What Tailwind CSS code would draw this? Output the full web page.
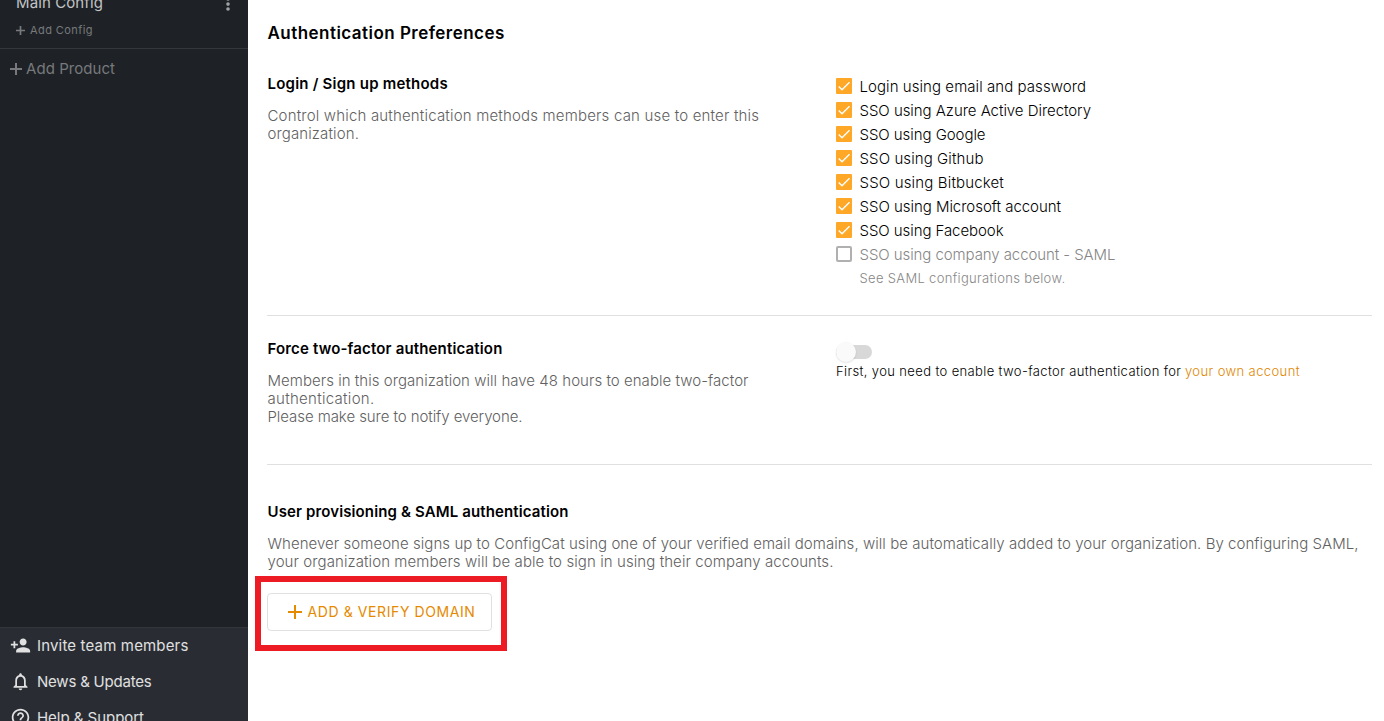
<!DOCTYPE html>
<html lang="en">
<head>
<meta charset="utf-8">
<title>Authentication Preferences</title>
<script src="https://cdn.jsdelivr.net/npm/@tailwindcss/browser@4"></script>
</head>
<body class="flex h-[721px] w-[1384px] overflow-hidden bg-white font-['Inter',sans-serif] text-[15px] leading-[18px] text-black whitespace-nowrap">
<svg class="hidden">
  <symbol id="check" viewBox="0 0 24 24"><path d="M4.1 12.7 9 17.6 20.3 6.3" fill="none" stroke="#fff" stroke-width="2.1"/></symbol>
</svg>

<aside class="flex w-[248px] shrink-0 flex-col bg-[#1e2226]">
  <div class="h-[49px] shrink-0 overflow-hidden border-b border-[#34383d] pl-4">
    <div class="-mt-[6px] flex h-[18px] justify-between">
      <span class="tracking-[0.1px] text-[#c3c4c6]">Main Config</span>
      <svg class="mt-[2px] mr-3 size-4" viewBox="0 0 16 16" fill="#a0a2a4"><circle cx="8" cy="3" r="1.8"/><circle cx="8" cy="8.1" r="1.8"/><circle cx="8" cy="13" r="1.8"/></svg>
    </div>
    <div class="mt-[11px] flex h-[14px] items-center text-[11px] leading-[14px] tracking-[0.42px] text-[#77797c]">
      <svg class="mr-[5px] size-[9px]" viewBox="0 0 9 9"><path d="M4.5 0v9M0 4.5h9" stroke="currentColor" stroke-width="1.7"/></svg>
      <span>Add Config</span>
    </div>
  </div>
  <div class="mt-[11px] flex h-[18px] items-center pl-[10px] tracking-[0.05px] text-[#77797c]">
    <svg class="mr-1 size-3" viewBox="0 0 12 12"><path d="M6 0v12M0 6h12" stroke="currentColor" stroke-width="2"/></svg>
    <span>Add Product</span>
  </div>
  <div class="mt-auto h-[94px] shrink-0 overflow-hidden border-t border-[#33373c] bg-[#292d33] text-[#e0e0e1]">
    <div class="flex h-9 items-center pl-[10px]">
      <svg class="mr-[6px] mb-[1px] size-[21px]" viewBox="0 0 24 24" fill="currentColor"><path d="M15 12c2.21 0 4-1.79 4-4s-1.79-4-4-4-4 1.79-4 4 1.790 4 4 4zm-9-2V7H4v3H1v2h3v3h2v-3h3v-2H6zm9 4c-2.670 0-8 1.340-8 4v2h16v-2c0-2.660-5.330-4-8-4z"/></svg>
      <span class="tracking-[0.162px]">Invite team members</span>
    </div>
    <div class="flex h-9 items-center pl-[10px]">
      <svg class="mr-[6px] mb-[1px] size-[21px]" viewBox="0 0 24 24" fill="currentColor"><path d="M12 22c1.100 0 2-.9 2-2h-4c0 1.100.9 2 2 2zm6-6v-5c0-3.070-1.630-5.640-4.500-6.320V4c0-.83-.67-1.500-1.500-1.500s-1.500.67-1.500 1.500v.68C7.640 5.360 6 7.920 6 11v5l-2 2v1h16v-1l-2-2zm-2 1H8v-6c0-2.480 1.510-4.500 4-4.500s4 2.020 4 4.500v6z"/></svg>
      <span class="tracking-[-0.211px]">News &amp; Updates</span>
    </div>
    <div class="flex h-9 items-center pl-[10px]">
      <svg class="mr-[6px] mb-[1px] size-[21px]" viewBox="0 0 24 24" fill="currentColor"><path d="M11 18h2v-2h-2v2zm1-16C6.480 2 2 6.480 2 12s4.480 10 10 10 10-4.480 10-10S17.520 2 12 2zm0 18c-4.410 0-8-3.590-8-8s3.590-8 8-8 8 3.590 8 8-3.590 8-8 8zm0-14c-2.210 0-4 1.790-4 4h2c0-1.100.9-2 2-2s2 .9 2 2c0 2-3 1.750-3 5h2c0-2.250 3-2.500 3-5 0-2.210-1.790-4-4-4z"/></svg>
      <span class="tracking-[-0.033px]">Help &amp; Support</span>
    </div>
  </div>
</aside>

<main class="flex w-[1124px] flex-col pl-[19px]">
  <h1 class="mt-[22px] h-[22px] pl-[0.5px] text-[17px] leading-[22px] font-semibold tracking-[0.463px]">Authentication Preferences</h1>

  <section class="mt-[31px] flex h-[241px] border-b border-[#e0e0e0]">
    <div class="w-[569px] pl-[0.5px]">
      <h2 class="font-semibold tracking-[0.22px]">Login / Sign up methods</h2>
      <p class="mt-[14px] font-light text-[#616161]"><span class="tracking-[0.18px]">Control which authentication methods members can use to enter this</span><br><span class="tracking-[0.119px]">organization.</span></p>
    </div>
    <div class="font-light leading-6">
      <div class="flex h-6 items-center"><svg class="mr-[7.5px] mb-[2px] size-4 rounded-[1px] bg-[#ffa726]"><use href="#check"/></svg><span class="tracking-[0.064px]">Login using email and password</span></div>
      <div class="flex h-6 items-center"><svg class="mr-[7.5px] mb-[2px] size-4 rounded-[1px] bg-[#ffa726]"><use href="#check"/></svg><span class="tracking-[-0.044px]">SSO using Azure Active Directory</span></div>
      <div class="flex h-6 items-center"><svg class="mr-[7.5px] mb-[2px] size-4 rounded-[1px] bg-[#ffa726]"><use href="#check"/></svg><span class="tracking-[-0.056px]">SSO using Google</span></div>
      <div class="flex h-6 items-center"><svg class="mr-[7.5px] mb-[2px] size-4 rounded-[1px] bg-[#ffa726]"><use href="#check"/></svg><span class="tracking-[0.091px]">SSO using Github</span></div>
      <div class="flex h-6 items-center"><svg class="mr-[7.5px] mb-[2px] size-4 rounded-[1px] bg-[#ffa726]"><use href="#check"/></svg><span class="tracking-[0.16px]">SSO using Bitbucket</span></div>
      <div class="flex h-6 items-center"><svg class="mr-[7.5px] mb-[2px] size-4 rounded-[1px] bg-[#ffa726]"><use href="#check"/></svg><span class="tracking-[-0.031px]">SSO using Microsoft account</span></div>
      <div class="flex h-6 items-center"><svg class="mr-[7.5px] mb-[2px] size-4 rounded-[1px] bg-[#ffa726]"><use href="#check"/></svg><span class="tracking-[-0.07px]">SSO using Facebook</span></div>
      <div class="flex h-6 items-center text-[#868686]"><span class="mr-[7.5px] mb-[2px] size-4 rounded-[2px] border-2 border-[#b0b0b0]"></span><span class="tracking-[-0.08px]">SSO using company account - SAML</span></div>
      <div class="-mt-px h-6 pl-[23.5px] text-[13px] tracking-[0.335px] text-[#868686]">See SAML configurations below.</div>
    </div>
  </section>

  <section class="flex h-[149px] border-b border-[#e0e0e0] pt-6">
    <div class="w-[569px] pl-[0.5px]">
      <h2 class="font-semibold tracking-[0.159px]">Force two-factor authentication</h2>
      <p class="mt-[14px] font-light text-[#616161]"><span class="tracking-[0.039px]">Members in this organization will have 48 hours to enable two-factor</span><br><span class="tracking-[0.295px]">authentication.</span><br><span class="tracking-[-0.069px]">Please make sure to notify everyone.</span></p>
    </div>
    <div class="text-[13px] font-light">
      <div class="mt-[5px] flex h-[14px] w-9 items-center rounded-full bg-[#d8d8d8]"><span class="size-5 shrink-0 rounded-full bg-[#fafafa] shadow-[0_1px_2px_rgba(0,0,0,0.12)]"></span></div>
      <p class="mt-[3px]"><span class="tracking-[0.37px]">First, you need to enable two-factor authentication for</span> <a class="tracking-[0.399px] text-[#e08600]">your own account</a></p>
    </div>
  </section>

  <section class="pt-[38px]">
    <h2 class="pl-[0.5px] font-semibold tracking-[0.125px]">User provisioning &amp; SAML authentication</h2>
    <p class="mt-[14px] pl-[0.5px] font-light text-[#616161]"><span class="tracking-[0.051px]">Whenever someone signs up to ConfigCat using one of your verified email domains, will be automatically added to your organization. By configuring SAML,</span><br><span class="tracking-[0.086px]">your organization members will be able to sign in using their company accounts.</span></p>
    <div class="mt-[5px] -ml-3 h-[75px] w-[252px] border-6 border-[#ed1c24] pt-[11px] pl-[6px]">
      <button class="flex h-[38px] w-[225px] items-center rounded border border-[#e0e0e0] pl-5 text-[14px] tracking-[0.593px] text-[#e68a00]">
        <svg class="mr-[5.5px] size-[14px]" viewBox="0 0 14 14"><path d="M7 0v14M0 7h14" stroke="currentColor" stroke-width="2"/></svg>
        <span>ADD &amp; VERIFY DOMAIN</span>
      </button>
    </div>
  </section>
</main>
</body>
</html>
